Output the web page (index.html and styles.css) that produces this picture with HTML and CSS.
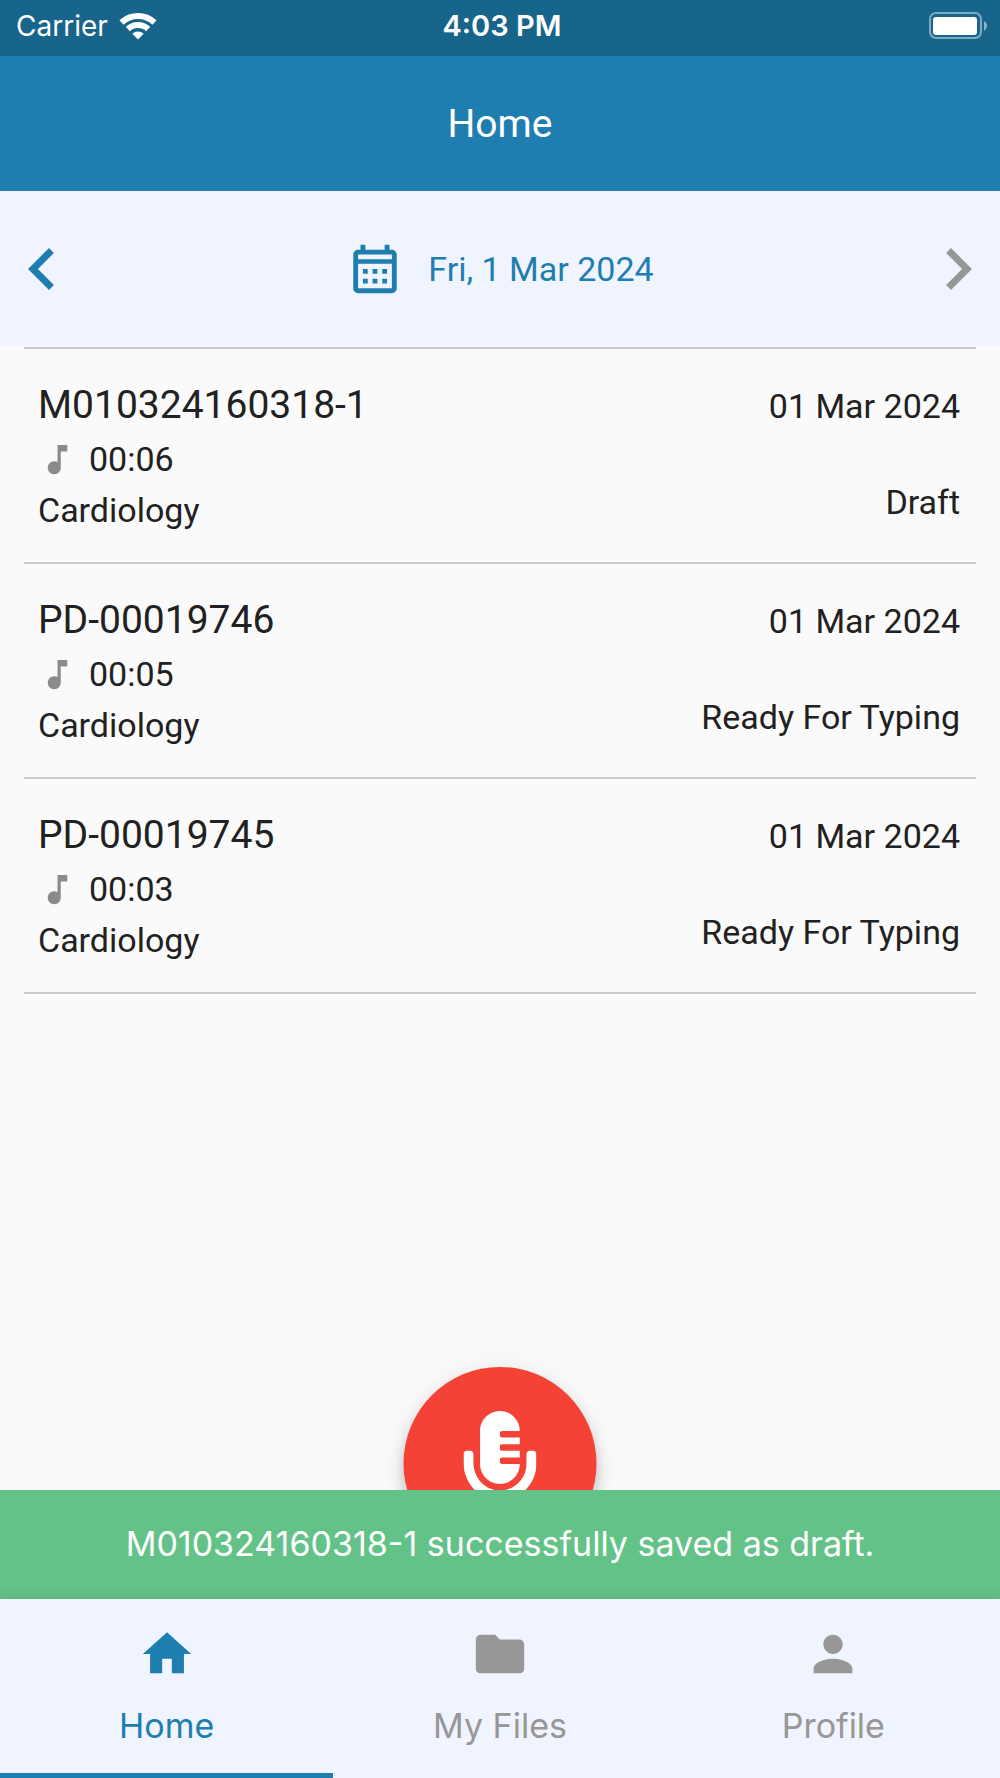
FILE: index.html
```html
<!DOCTYPE html>
<html lang="en">

<head>
    <meta charset="UTF-8">
    <meta name="viewport" content="width=device-width, initial-scale=1.0">
    <title>Home</title>
    <link rel="stylesheet" href="styles.css">
</head>

<body>
    <div class="status-bar">
        <div class="carrier">
            <span>Carrier</span>
            <svg class="wifi" viewBox="0 0 38 28">
                <g fill="none" stroke="#fff" stroke-width="6">
                    <path d="M2.5 10.5a24 24 0 0 1 33 0"/>
                    <path d="M8.8 17a15 15 0 0 1 20.4 0"/>
                </g>
                <path fill="#fff" d="M13.3 21.8a8.5 8.5 0 0 1 11.4 0L19 27.5z"/>
            </svg>
        </div>
        <span class="clock">4:03 PM</span>
        <svg class="battery" viewBox="0 0 60 28">
            <rect x="2" y="1" width="51" height="25" rx="6" fill="none" stroke="#fff" stroke-opacity="0.45" stroke-width="2"/>
            <rect x="5" y="5" width="44" height="18" rx="3" fill="#fff"/>
            <path d="M56 9c4 2 4 7 0 10z" fill="#fff" fill-opacity="0.5"/>
        </svg>
    </div>

    <header class="app-bar">
        <h1>Home</h1>
    </header>

    <div class="date-bar">
        <button type="button" class="arrow" aria-label="Previous day">
            <svg viewBox="0 0 24 24"><path d="M15.41 7.41L14 6l-6 6 6 6 1.41-1.41L10.83 12z"/></svg>
        </button>
        <button type="button" class="date">
            <svg viewBox="0 0 24 24"><path d="M19 4h-1V2h-2v2H8V2H6v2H5c-1.11 0-1.99.9-1.99 2L3 20c0 1.1.89 2 2 2h14c1.1 0 2-.9 2-2V6c0-1.1-.9-2-2-2zm0 16H5V9.8h14V20zm0-12H5V6h14v2zM9 14H7v-2h2v2zm4 0h-2v-2h2v2zm4 0h-2v-2h2v2zm-8 4H7v-2h2v2zm4 0h-2v-2h2v2zm4 0h-2v-2h2v2z"/></svg>
            <span>Fri, 1 Mar 2024</span>
        </button>
        <button type="button" class="arrow" aria-label="Next day" disabled>
            <svg viewBox="0 0 24 24"><path d="M10 6L8.59 7.41 13.17 12l-4.58 4.59L10 18l6-6z"/></svg>
        </button>
    </div>

    <main>
        <ul class="files">
            <li>
                <div class="info">
                    <h2>M010324160318-1</h2>
                    <p class="length">
                        <svg viewBox="0 0 24 24"><path d="M12 3v10.55c-.59-.34-1.27-.55-2-.55-2.21 0-4 1.79-4 4s1.79 4 4 4 4-1.79 4-4V7h4V3h-6z"/></svg>
                        00:06
                    </p>
                    <p class="department">Cardiology</p>
                </div>
                <div class="state">
                    <p>01 Mar 2024</p>
                    <p>Draft</p>
                </div>
            </li>
            <li>
                <div class="info">
                    <h2>PD-00019746</h2>
                    <p class="length">
                        <svg viewBox="0 0 24 24"><path d="M12 3v10.55c-.59-.34-1.27-.55-2-.55-2.21 0-4 1.79-4 4s1.79 4 4 4 4-1.79 4-4V7h4V3h-6z"/></svg>
                        00:05
                    </p>
                    <p class="department">Cardiology</p>
                </div>
                <div class="state">
                    <p>01 Mar 2024</p>
                    <p>Ready For Typing</p>
                </div>
            </li>
            <li>
                <div class="info">
                    <h2>PD-00019745</h2>
                    <p class="length">
                        <svg viewBox="0 0 24 24"><path d="M12 3v10.55c-.59-.34-1.27-.55-2-.55-2.21 0-4 1.79-4 4s1.79 4 4 4 4-1.79 4-4V7h4V3h-6z"/></svg>
                        00:03
                    </p>
                    <p class="department">Cardiology</p>
                </div>
                <div class="state">
                    <p>01 Mar 2024</p>
                    <p>Ready For Typing</p>
                </div>
            </li>
        </ul>

        <button type="button" class="record" aria-label="Record">
            <svg viewBox="0 0 352 512"><path d="M336 192h-16c-8.84 0-16 7.16-16 16v48c0 74.8-64.49 134.82-140.79 127.38C96.71 376.89 48 317.11 48 250.3V208c0-8.84-7.16-16-16-16H16c-8.84 0-16 7.16-16 16v40.16c0 89.64 63.97 169.55 152 181.69V464H96c-8.84 0-16 7.16-16 16v16c0 8.84 7.16 16 16 16h160c8.84 0 16-7.16 16-16v-16c0-8.84-7.16-16-16-16h-56v-33.77C285.71 418.47 352 344.9 352 256v-48c0-8.84-7.16-16-16-16zM176 352c53.02 0 96-42.98 96-96h-85.33c-5.89 0-10.67-3.58-10.67-8v-16c0-4.42 4.78-8 10.67-8H272v-32h-85.33c-5.89 0-10.67-3.58-10.67-8v-16c0-4.42 4.78-8 10.67-8H272v-32h-85.33c-5.89 0-10.67-3.58-10.67-8v-16c0-4.42 4.78-8 10.67-8H272c0-53.02-42.98-96-96-96S80 42.98 80 96v160c0 53.02 42.98 96 96 96z"/></svg>
        </button>
    </main>

    <div class="snackbar" role="status">M010324160318-1 successfully saved as draft.</div>

    <nav class="tabs">
        <a href="#home" class="active">
            <svg viewBox="0 0 24 24"><path d="M10 20v-6h4v6h5v-8h3L12 3 2 12h3v8z"/></svg>
            <span>Home</span>
        </a>
        <a href="#files">
            <svg viewBox="0 0 24 24"><path d="M10 4H4c-1.1 0-1.99.9-1.99 2L2 18c0 1.1.9 2 2 2h16c1.1 0 2-.9 2-2V8c0-1.1-.9-2-2-2h-8l-2-2z"/></svg>
            <span>My Files</span>
        </a>
        <a href="#profile">
            <svg viewBox="0 0 24 24"><path d="M12 12c2.21 0 4-1.79 4-4s-1.79-4-4-4-4 1.79-4 4 1.79 4 4 4zm0 2c-2.67 0-8 1.34-8 4v2h16v-2c0-2.66-5.33-4-8-4z"/></svg>
            <span>Profile</span>
        </a>
    </nav>
</body>

</html>
```

FILE: styles.css
```css
* {
    box-sizing: border-box;
}

body {
    margin: 0;
    min-height: 100vh;
    display: flex;
    flex-direction: column;
    font-family: Roboto, sans-serif;
    font-size: 34px;
    color: #212121;
    background-color: #fafafa;
}

h1, h2, p, ul {
    margin: 0;
    padding: 0;
    font-weight: 400;
}

button {
    padding: 0;
    border: none;
    background: none;
    font: inherit;
    color: inherit;
    cursor: pointer;
}

svg {
    display: block;
    fill: currentColor;
}

/* status bar */
.status-bar {
    display: grid;
    grid-template-columns: 1fr auto 1fr;
    align-items: center;
    height: 56px;
    padding: 0 12px 5px 16px;
    font-family: Inter, sans-serif;
    font-size: 28px;
    color: #fff;
    background-color: #18658b;
}

.carrier {
    display: flex;
    align-items: center;
    gap: 11px;
}

.wifi {
    width: 38px;
    height: 28px;
}

.clock {
    font-size: 29px;
    font-weight: 600;
}

.battery {
    width: 60px;
    height: 28px;
    justify-self: end;
}

/* title */
.app-bar {
    display: flex;
    justify-content: center;
    align-items: center;
    height: 135px;
    color: #fff;
    background-color: #1f7eb0;
}

.app-bar h1 {
    font-size: 39px;
}

/* day picker */
.date-bar {
    display: flex;
    justify-content: space-between;
    align-items: center;
    height: 155px;
    color: #1f7eb0;
    background-color: #f0f4ff;
}

.arrow svg {
    width: 84px;
    height: 84px;
}

.arrow:disabled {
    color: #979797;
    cursor: default;
}

.date {
    display: flex;
    align-items: center;
    gap: 24px;
}

.date svg {
    width: 58px;
    height: 58px;
}

/* list */
main {
    flex: 1;
    position: relative;
    padding: 1px 24px 120px;
}

.files {
    list-style: none;
    border-top: 2px solid #cacaca;
}

.files li {
    display: flex;
    justify-content: space-between;
    padding: 30px 16px 29px 14px;
    border-bottom: 2px solid #cacaca;
}

.info h2 {
    font-size: 39px;
    line-height: 52px;
}

.length {
    display: flex;
    align-items: center;
    gap: 12px;
    line-height: 56px;
}

.length svg {
    width: 39px;
    height: 39px;
    color: #8b8b8b;
}

.department {
    line-height: 46px;
}

.state {
    display: flex;
    flex-direction: column;
    gap: 42px;
    text-align: right;
    line-height: 54px;
}

/* record button, partly under the snackbar */
.record {
    position: absolute;
    left: 50%;
    bottom: -70px;
    transform: translateX(-50%);
    display: flex;
    justify-content: center;
    align-items: center;
    width: 193px;
    height: 193px;
    border-radius: 50%;
    color: #fff;
    background-color: #f44336;
    box-shadow: 0 9px 14px rgba(0, 0, 0, 0.2), 0 4px 30px rgba(0, 0, 0, 0.08);
}

.record svg {
    height: 106px;
}

.snackbar {
    position: relative;
    padding: 32px 24px 33px;
    font-family: Inter, sans-serif;
    font-size: 34px;
    line-height: 44px;
    text-align: center;
    color: #fff;
    background-color: #63c287;
}

/* bottom tabs */
.tabs {
    position: relative;
    display: grid;
    grid-template-columns: repeat(3, 1fr);
    font-family: Inter, sans-serif;
    font-size: 34px;
    background-color: #f0f4ff;
    box-shadow: 0 0 12px rgba(0, 0, 0, 0.12);
}

.tabs a {
    display: flex;
    flex-direction: column;
    align-items: center;
    gap: 21px;
    padding: 26px 0 25px;
    line-height: 44px;
    color: #979797;
    text-decoration: none;
    border-bottom: 5px solid transparent;
}

.tabs a.active {
    color: #1f7eb0;
    border-bottom-color: #1f7eb0;
}

.tabs svg {
    width: 58px;
    height: 58px;
}
```
